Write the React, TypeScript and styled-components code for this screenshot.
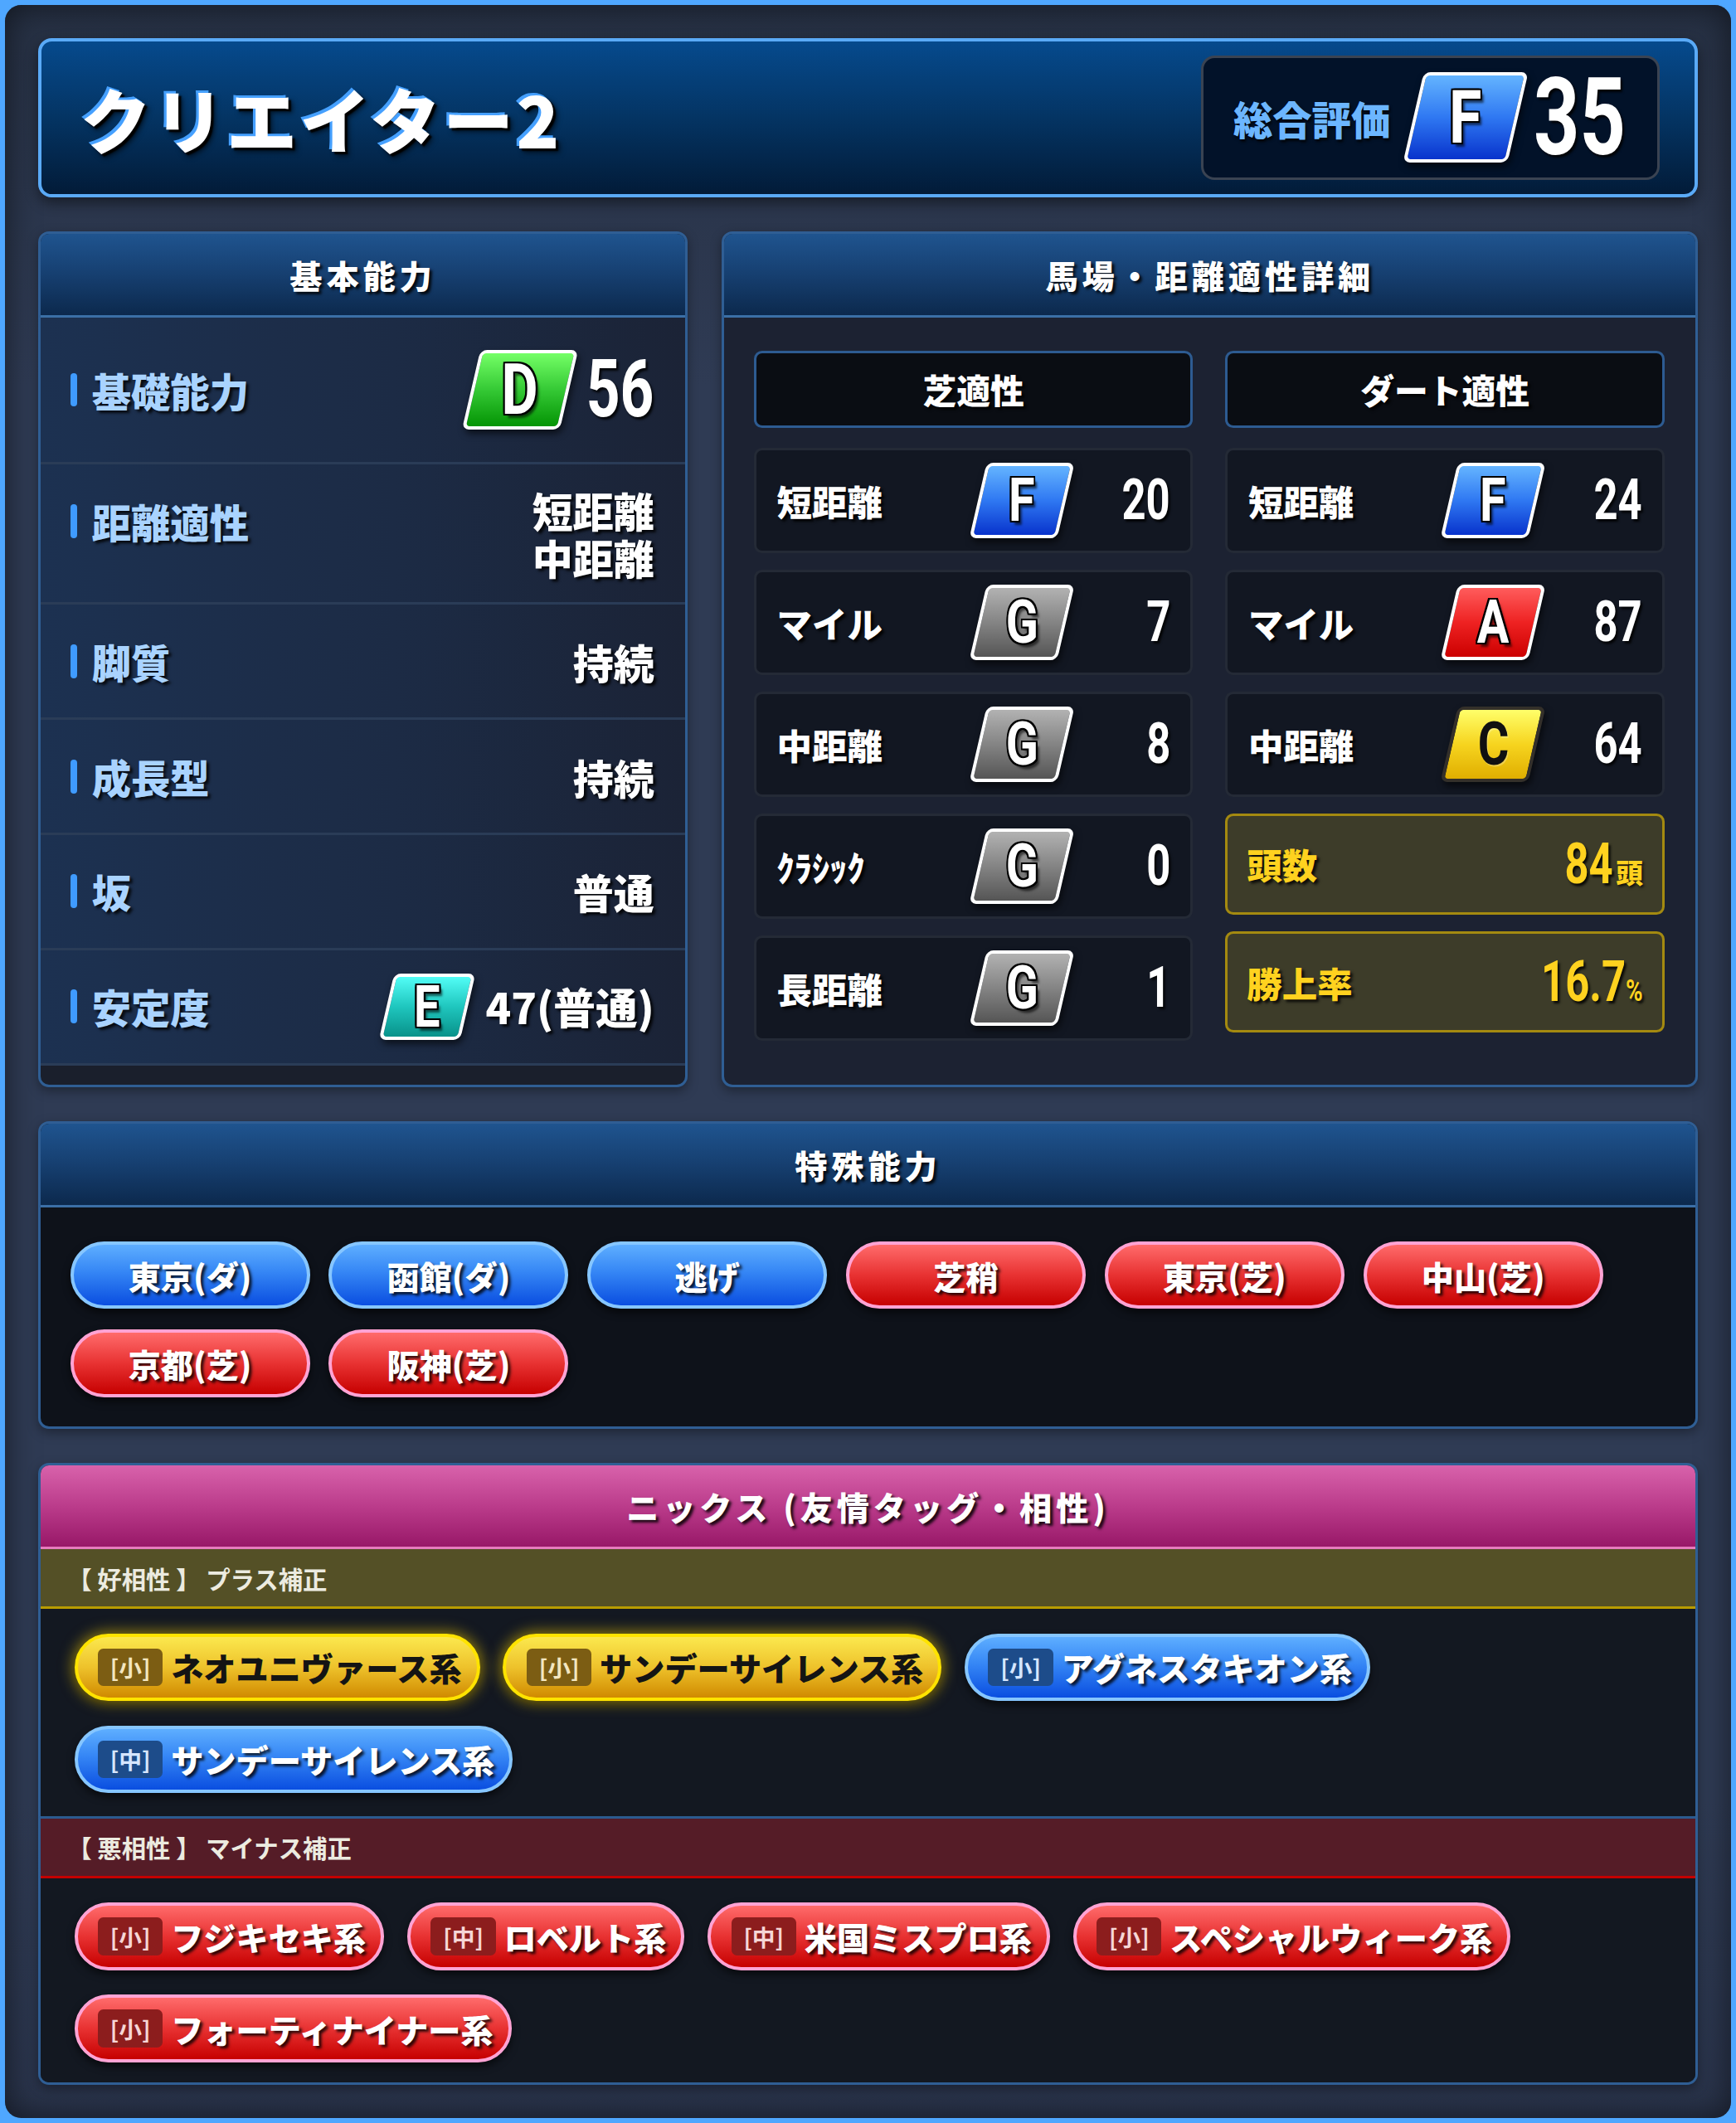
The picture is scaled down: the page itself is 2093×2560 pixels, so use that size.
import React from "react"
import styled, { createGlobalStyle } from "styled-components"

type GradeKey = "F" | "G" | "D" | "A" | "C" | "E"
type Tone = "blue" | "red" | "gold"

const GlobalStyle = createGlobalStyle`
  html, body {
    margin: 0;
    padding: 0;
    background: #4fa7ff;
  }
  body {
    font-family: "Noto Sans CJK JP", "Noto Sans", sans-serif;
  }
`

// the shot is 2093px wide, the layout is measured on a 1282px grid
const Frame = styled.div`
  zoom: 1.6326;
  box-sizing: border-box;
  width: 1282px;
  height: 1568px;
  padding: 3.5px;
  background: #4fa7ff;
`

const Screen = styled.main`
  box-sizing: border-box;
  height: 100%;
  padding: 24.5px;
  border-radius: 12px;
  background: linear-gradient(180deg, #263043 0%, #2f3b54 18%, #2f3b54 85%, #29334a 100%);
  box-shadow: inset 0 0 24px rgba(0, 0, 0, 0.55);
  display: flex;
  flex-direction: column;
  gap: 25px;

  & * {
    box-sizing: border-box;
  }
`

const TitleBar = styled.header`
  flex: none;
  height: 118px;
  display: flex;
  align-items: center;
  justify-content: space-between;
  padding: 0 26px 0 29px;
  border: 3px solid #5aaaf7;
  border-radius: 10px;
  background: linear-gradient(180deg, #064a8d 0%, #043463 50%, #021b38 100%);
  box-shadow: 0 4px 10px rgba(0, 0, 0, 0.45);
`

const Title = styled.h1`
  margin: 0;
  font-size: 52px;
  font-weight: 900;
  line-height: 1;
  letter-spacing: 2px;
  color: #fff;
  text-shadow: -2px -2px 0 #45a0ff, 2px 2px 1px #000, 3px 3px 4px rgba(0, 0, 0, 0.6);
`

const Rating = styled.div`
  height: 92px;
  display: flex;
  align-items: center;
  padding: 0 23px 0 22px;
  background: #021229;
  border: 2px solid #3a4352;
  border-radius: 10px;
`

const RatingLabel = styled.span`
  margin-right: 17px;
  font-size: 29px;
  font-weight: 900;
  color: #6cb6ff;
  text-shadow: 1px 2px 2px rgba(0, 0, 0, 0.8);
`

const gradeFill: Record<GradeKey, string> = {
  F: "linear-gradient(180deg, #64b4ff 0%, #2f78f2 50%, #0833cc 100%)",
  G: "linear-gradient(180deg, #b2b2b2 0%, #848484 50%, #555 100%)",
  D: "linear-gradient(180deg, #74ff66 0%, #35c935 50%, #049404 100%)",
  A: "linear-gradient(180deg, #ff5c5c 0%, #ee2222 50%, #cc0000 100%)",
  C: "linear-gradient(180deg, #ffff6a 0%, #f6d41f 50%, #e0ae00 100%)",
  E: "linear-gradient(180deg, #52fdf6 0%, #1fc6be 50%, #08928a 100%)",
}

const gradeSizes = {
  xl: { w: 77, h: 67, f: 55 },
  lg: { w: 72, h: 59, f: 52 },
  md: { w: 65, h: 56, f: 44 },
  sm: { w: 60, h: 49, f: 43 },
}

const GradeBox = styled.span<{ $g: GradeKey; $w: number; $h: number }>`
  flex: none;
  display: inline-flex;
  align-items: center;
  justify-content: center;
  width: ${(p) => p.$w}px;
  height: ${(p) => p.$h}px;
  transform: skewX(-13deg);
  border: 2.5px solid ${(p) => (p.$g === "C" ? "#34302a" : "#fff")};
  border-radius: 5px;
  background: ${(p) => gradeFill[p.$g]};
  box-shadow: 2px 3px 5px rgba(0, 0, 0, 0.6);
`

const GradeLetter = styled.span<{ $f: number; $dark: boolean }>`
  display: inline-block;
  transform: skewX(13deg) scaleX(0.8);
  font-family: Roboto, "Liberation Sans", sans-serif;
  font-weight: 700;
  font-size: ${(p) => p.$f}px;
  line-height: 1;
  color: ${(p) => (p.$dark ? "#111" : "#fff")};
  text-shadow: ${(p) =>
    p.$dark
      ? "1px 1px 0 rgba(255,255,255,.25)"
      : "-1.5px -1.5px 0 #000, 1.5px -1.5px 0 #000, -1.5px 1.5px 0 #000, 1.5px 1.5px 0 #000, 0 -1.5px 0 #000, 0 1.5px 0 #000, -1.5px 0 0 #000, 1.5px 0 0 #000, 3px 3px 2px rgba(0,0,0,.6)"};
`

const Num = styled.span<{ $size: number; $color?: string }>`
  display: inline-block;
  white-space: nowrap;
  font-family: Roboto, "Liberation Sans", sans-serif;
  font-weight: 700;
  font-size: ${(p) => p.$size}px;
  line-height: 1;
  color: ${(p) => p.$color ?? "#fff"};
  transform: scaleX(0.74);
  transform-origin: 100% 50%;
  text-shadow: 2px 2px 2px rgba(0, 0, 0, 0.85);

  & small {
    font-size: 0.55em;
  }
`

const NumSlot = styled.span<{ $w: number; $gap?: number }>`
  flex: none;
  display: flex;
  justify-content: flex-end;
  width: ${(p) => p.$w}px;
  margin-left: ${(p) => p.$gap ?? 0}px;
`

const TopGrid = styled.div`
  flex: none;
  height: 632px;
  display: grid;
  grid-template-columns: 480px 1fr;
  gap: 25px;
`

const Panel = styled.section<{ $bg: string; $grow?: boolean }>`
  flex: ${(p) => (p.$grow ? "1 1 auto" : "none")};
  min-height: 0;
  display: flex;
  flex-direction: column;
  overflow: hidden;
  border: 2px solid #2f5e94;
  border-radius: 8px;
  background: ${(p) => p.$bg};
  box-shadow: 0 3px 8px rgba(0, 0, 0, 0.35);
`

const PanelHead = styled.h2<{ $pink?: boolean }>`
  flex: none;
  margin: 0;
  height: 62px;
  display: flex;
  align-items: center;
  justify-content: center;
  font-size: 24px;
  font-weight: 900;
  letter-spacing: 3px;
  color: #fff;
  text-shadow: 2px 2px 2px rgba(0, 0, 0, 0.85);
  background: ${(p) =>
    p.$pink
      ? "linear-gradient(180deg, #d862ab 0%, #bb3c8b 50%, #981868 100%)"
      : "linear-gradient(180deg, #1f548f 0%, #163f70 50%, #0c294d 100%)"};
  border-bottom: 2px solid ${(p) => (p.$pink ? "#e67bbd" : "#3b6fa6")};
`

const StatRow = styled.div<{ $h: number }>`
  flex: none;
  height: ${(p) => p.$h}px;
  display: flex;
  align-items: center;
  justify-content: space-between;
  padding: 0 23px 0 22px;
  background: linear-gradient(90deg, #1c3151 0%, #1c2b45 55%, #1b2336 100%);
  border-bottom: 2px solid #2a3c57;
`

const StatLabel = styled.span<{ $lift?: number }>`
  display: flex;
  align-items: center;
  gap: 11px;
  margin-bottom: ${(p) => p.$lift ?? 0}px;
  font-size: 29px;
  font-weight: 900;
  color: #a9d3ff;
  text-shadow: 2px 2px 2px rgba(0, 0, 0, 0.8);

  &::before {
    content: "";
    width: 5px;
    height: 25px;
    border-radius: 3px;
    background: #3f9bff;
  }
`

const StatValue = styled.div`
  display: flex;
  align-items: center;
  gap: 13px;
  font-size: 30px;
  font-weight: 900;
  line-height: 1;
  color: #fff;
  text-shadow: 2px 2px 2px rgba(0, 0, 0, 0.85);
`

const ValueLines = styled.div`
  display: flex;
  flex-direction: column;
  align-items: flex-end;
  gap: 5px;
  font-size: 30px;
  font-weight: 900;
  line-height: 1;
  color: #fff;
  text-shadow: 2px 2px 2px rgba(0, 0, 0, 0.85);
`

const PlainText = styled.span`
  font-size: 31px;
`

const AptBody = styled.div`
  display: grid;
  grid-template-columns: 1fr 1fr;
  gap: 24px;
  padding: 24px 23px 0 22px;
`

const AptCol = styled.div`
  display: flex;
  flex-direction: column;
  gap: 12px;
`

const ColHead = styled.div`
  height: 57px;
  margin-bottom: 3px;
  display: flex;
  align-items: center;
  justify-content: center;
  font-size: 25px;
  font-weight: 900;
  color: #fff;
  text-shadow: 2px 2px 2px rgba(0, 0, 0, 0.9);
  background: #0a0d13;
  border: 2px solid #2d5b91;
  border-radius: 6px;
`

const AptRow = styled.div`
  height: 78px;
  display: grid;
  grid-template-columns: 1fr 65px 77px;
  align-items: center;
  padding: 0 15px;
  background: #121722;
  border: 2px solid #242a36;
  border-radius: 6px;
`

const AptLabel = styled.span`
  font-size: 26px;
  font-weight: 900;
  color: #fff;
  text-shadow: 2px 2px 2px rgba(0, 0, 0, 0.9);
`

const AptNum = styled.div`
  display: flex;
  justify-content: flex-end;
`

const TallyBox = styled.div`
  height: 75px;
  display: flex;
  align-items: center;
  justify-content: space-between;
  padding: 0 14px;
  background: #3d3c29;
  border: 2px solid #a48a10;
  border-radius: 6px;
`

const TallyLabel = styled.span`
  font-size: 26px;
  font-weight: 900;
  color: #ffd21f;
  text-shadow: 2px 2px 2px rgba(0, 0, 0, 0.8);
`

const TallyValue = styled.div`
  display: flex;
  align-items: baseline;
  gap: 2px;
`

const Unit = styled.span`
  font-size: 20px;
  font-weight: 900;
  color: #ffd21f;
  text-shadow: 1px 1px 2px rgba(0, 0, 0, 0.8);
`

const pillFill: Record<Tone, string> = {
  blue: "linear-gradient(180deg, #5eaeff 0%, #3586f5 45%, #0a4ee0 100%)",
  red: "linear-gradient(180deg, #ff6b6b 0%, #e83232 50%, #c60000 100%)",
  gold: "linear-gradient(180deg, #fbe84e 0%, #eec22b 50%, #d08a00 100%)",
}

const pillEdge: Record<Tone, string> = {
  blue: "#86c6ff",
  red: "#ffa3d4",
  gold: "#ffe300",
}

const Pill = styled.span<{ $tone: Tone }>`
  flex: none;
  height: 50px;
  display: inline-flex;
  align-items: center;
  justify-content: center;
  border-radius: 25px;
  border: 2.5px solid ${(p) => pillEdge[p.$tone]};
  background: ${(p) => pillFill[p.$tone]};
  font-size: 24px;
  font-weight: 900;
  white-space: nowrap;
  color: ${(p) => (p.$tone === "gold" ? "#141414" : "#fff")};
  text-shadow: ${(p) => (p.$tone === "gold" ? "none" : "2px 2px 2px rgba(0,0,0,.8)")};
  box-shadow: ${(p) =>
    p.$tone === "gold"
      ? "0 0 10px 2px rgba(255, 214, 0, 0.5), 0 3px 6px rgba(0,0,0,.5)"
      : "0 3px 6px rgba(0, 0, 0, 0.6)"};
`

const SkillPill = styled(Pill)`
  width: 177px;
`

const NickPill = styled(Pill)`
  justify-content: flex-start;
  gap: 6px;
  padding: 0 11px 0 15px;
`

const tagFill: Record<Tone, string> = {
  blue: "#1d4c8a",
  red: "#8c1d1d",
  gold: "#7c5d13",
}

const tagInk: Record<Tone, string> = {
  blue: "#d6e6ff",
  red: "#f6d6d6",
  gold: "#f3e6c0",
}

const NickTag = styled.span<{ $tone: Tone }>`
  width: 48px;
  height: 28px;
  display: inline-flex;
  align-items: center;
  justify-content: center;
  border-radius: 4px;
  font-size: 17px;
  font-weight: 700;
  color: ${(p) => tagInk[p.$tone]};
  background: ${(p) => tagFill[p.$tone]};
  text-shadow: none;
`

const SkillBody = styled.div`
  display: flex;
  flex-wrap: wrap;
  gap: 15px 14px;
  padding: 25px 22px 22px;
`

const GroupHead = styled.div<{ $bad?: boolean }>`
  flex: none;
  height: 44px;
  display: flex;
  align-items: center;
  padding-left: 20px;
  font-size: 18px;
  font-weight: 700;
  color: #ecebe0;
  background: ${(p) => (p.$bad ? "#551c27" : "#545026")};
  border-bottom: 2px solid ${(p) => (p.$bad ? "#c40000" : "#b89c00")};
`

const PillArea = styled.div<{ $last?: boolean }>`
  flex: ${(p) => (p.$last ? "1 1 auto" : "none")};
  display: flex;
  flex-wrap: wrap;
  align-content: flex-start;
  gap: 18px 17px;
  padding: 18px 25px ${(p) => (p.$last ? "14px" : "17px")};
  background: #131821;
  border-bottom: ${(p) => (p.$last ? "none" : "2px solid #2b5a8e")};
`

function Grade({ g, size }: { g: GradeKey; size: keyof typeof gradeSizes }) {
  const s = gradeSizes[size]
  return (
    <GradeBox $g={g} $w={s.w} $h={s.h}>
      <GradeLetter $f={s.f} $dark={g === "C"}>
        {g}
      </GradeLetter>
    </GradeBox>
  )
}

const turf = [
  { label: "短距離", g: "F", v: "20" },
  { label: "マイル", g: "G", v: "7" },
  { label: "中距離", g: "G", v: "8" },
  { label: "ｸﾗｼｯｸ", g: "G", v: "0" },
  { label: "長距離", g: "G", v: "1" },
] as const

const dirt = [
  { label: "短距離", g: "F", v: "24" },
  { label: "マイル", g: "A", v: "87" },
  { label: "中距離", g: "C", v: "64" },
] as const

const skills: { name: string; tone: Tone }[] = [
  { name: "東京(ダ)", tone: "blue" },
  { name: "函館(ダ)", tone: "blue" },
  { name: "逃げ", tone: "blue" },
  { name: "芝稍", tone: "red" },
  { name: "東京(芝)", tone: "red" },
  { name: "中山(芝)", tone: "red" },
  { name: "京都(芝)", tone: "red" },
  { name: "阪神(芝)", tone: "red" },
]

const goodNicks: { tag: string; name: string; tone: Tone }[] = [
  { tag: "[小]", name: "ネオユニヴァース系", tone: "gold" },
  { tag: "[小]", name: "サンデーサイレンス系", tone: "gold" },
  { tag: "[小]", name: "アグネスタキオン系", tone: "blue" },
  { tag: "[中]", name: "サンデーサイレンス系", tone: "blue" },
]

const badNicks = [
  { tag: "[小]", name: "フジキセキ系" },
  { tag: "[中]", name: "ロベルト系" },
  { tag: "[中]", name: "米国ミスプロ系" },
  { tag: "[小]", name: "スペシャルウィーク系" },
  { tag: "[小]", name: "フォーティナイナー系" },
]

export default function App() {
  return (
    <Frame>
      <GlobalStyle />
      <Screen>
        <TitleBar>
          <Title>クリエイター2</Title>
          <Rating>
            <RatingLabel>総合評価</RatingLabel>
            <Grade g="F" size="xl" />
            <NumSlot $w={66} $gap={14}>
              <Num $size={80}>35</Num>
            </NumSlot>
          </Rating>
        </TitleBar>

        <TopGrid>
          <Panel $bg="#1a1f2c">
            <PanelHead>基本能力</PanelHead>
            <StatRow $h={108}>
              <StatLabel>基礎能力</StatLabel>
              <StatValue>
                <Grade g="D" size="lg" />
                <NumSlot $w={50}>
                  <Num $size={59}>56</Num>
                </NumSlot>
              </StatValue>
            </StatRow>
            <StatRow $h={104}>
              <StatLabel $lift={18}>距離適性</StatLabel>
              <ValueLines>
                <span>短距離</span>
                <span>中距離</span>
              </ValueLines>
            </StatRow>
            <StatRow $h={85}>
              <StatLabel>脚質</StatLabel>
              <StatValue>持続</StatValue>
            </StatRow>
            <StatRow $h={85}>
              <StatLabel>成長型</StatLabel>
              <StatValue>持続</StatValue>
            </StatRow>
            <StatRow $h={85}>
              <StatLabel>坂</StatLabel>
              <StatValue>普通</StatValue>
            </StatRow>
            <StatRow $h={85}>
              <StatLabel>安定度</StatLabel>
              <StatValue>
                <Grade g="E" size="sm" />
                <PlainText>47(普通)</PlainText>
              </StatValue>
            </StatRow>
          </Panel>

          <Panel $bg="#1c2232">
            <PanelHead>馬場・距離適性詳細</PanelHead>
            <AptBody>
              <AptCol>
                <ColHead>芝適性</ColHead>
                {turf.map((r) => (
                  <AptRow key={r.label}>
                    <AptLabel>{r.label}</AptLabel>
                    <Grade g={r.g} size="md" />
                    <AptNum>
                      <Num $size={42}>{r.v}</Num>
                    </AptNum>
                  </AptRow>
                ))}
              </AptCol>
              <AptCol>
                <ColHead>ダート適性</ColHead>
                {dirt.map((r) => (
                  <AptRow key={r.label}>
                    <AptLabel>{r.label}</AptLabel>
                    <Grade g={r.g} size="md" />
                    <AptNum>
                      <Num $size={42}>{r.v}</Num>
                    </AptNum>
                  </AptRow>
                ))}
                <TallyBox>
                  <TallyLabel>頭数</TallyLabel>
                  <TallyValue>
                    <Num $size={42} $color="#ffd21f">
                      84
                    </Num>
                    <Unit>頭</Unit>
                  </TallyValue>
                </TallyBox>
                <TallyBox>
                  <TallyLabel>勝上率</TallyLabel>
                  <TallyValue>
                    <Num $size={42} $color="#ffd21f">
                      16.7<small>%</small>
                    </Num>
                  </TallyValue>
                </TallyBox>
              </AptCol>
            </AptBody>
          </Panel>
        </TopGrid>

        <Panel $bg="#0e121a">
          <PanelHead>特殊能力</PanelHead>
          <SkillBody>
            {skills.map((s) => (
              <SkillPill key={s.name} $tone={s.tone}>
                {s.name}
              </SkillPill>
            ))}
          </SkillBody>
        </Panel>

        <Panel $bg="#131821" $grow>
          <PanelHead $pink>ニックス (友情タッグ・相性)</PanelHead>
          <GroupHead>【 好相性 】 プラス補正</GroupHead>
          <PillArea>
            {goodNicks.map((n, i) => (
              <NickPill key={i} $tone={n.tone}>
                <NickTag $tone={n.tone}>{n.tag}</NickTag>
                {n.name}
              </NickPill>
            ))}
          </PillArea>
          <GroupHead $bad>【 悪相性 】 マイナス補正</GroupHead>
          <PillArea $last>
            {badNicks.map((n, i) => (
              <NickPill key={i} $tone="red">
                <NickTag $tone="red">{n.tag}</NickTag>
                {n.name}
              </NickPill>
            ))}
          </PillArea>
        </Panel>
      </Screen>
    </Frame>
  )
}
